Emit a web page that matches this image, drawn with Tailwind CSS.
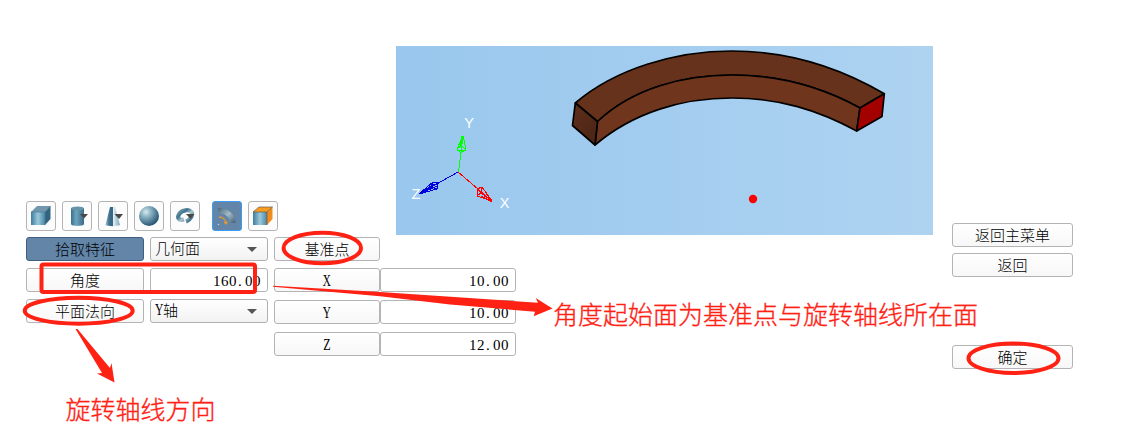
<!DOCTYPE html>
<html lang="zh-CN">
<head>
<meta charset="utf-8">
<title>拾取特征</title>
<script src="https://cdn.jsdelivr.net/npm/@tailwindcss/browser@4"></script>
</head>
<body class="bg-white overflow-hidden">
<div class="relative flex h-[442px] w-[1122px] overflow-hidden bg-white pl-[26px] pt-[46px] font-['Noto_Sans_CJK_SC',sans-serif] text-[15px] font-light leading-none text-black">
  <main class="w-[907px] shrink-0">
    <div class="flex items-end justify-between h-[189px]">
      <div class="flex gap-1.5 mb-1">
        <button class="size-[30px] rounded-[3px] border border-[#b4b4b4] bg-[#fcfcfc]"><svg class="size-7" viewBox="0 0 28 28"><defs><linearGradient id="b" x2="1"><stop stop-color="#3f7c9d"/><stop offset=".5" stop-color="#9bc9dc"/><stop offset="1" stop-color="#4b86a4"/></linearGradient></defs><path d="M4 10L10 4H23.500L18 10Z" fill="#7296ad"/><path d="M4 10H18V23H4Z" fill="url(#b)"/><path d="M18 10L23.500 4V17L18 23Z" fill="#33647f"/><path d="M4 10H18V23M18 10L23.500 4" fill="none" stroke="#477895" stroke-width=".7"/></svg></button>
        <button class="size-[30px] rounded-[3px] border border-[#b4b4b4] bg-[#fcfcfc]"><svg class="size-7" viewBox="0 0 28 28"><defs><linearGradient id="c" x2="1"><stop stop-color="#38718f"/><stop offset=".4" stop-color="#6ea4bd"/><stop offset="1" stop-color="#386a87"/></linearGradient></defs><path d="M8 6V22C8 24.500 21 24.500 21 22V6Z" fill="url(#c)"/><ellipse cx="14.500" cy="6.500" rx="6.500" ry="2" fill="#6894aa"/><path d="M17 12H25L21 16.500Z" fill="#484848"/></svg></button>
        <button class="size-[30px] rounded-[3px] border border-[#b4b4b4] bg-[#fcfcfc]"><svg class="size-7" viewBox="0 0 28 28"><defs><linearGradient id="d" x2="1"><stop stop-color="#9fc2d0"/><stop offset=".25" stop-color="#3e728e"/><stop offset=".48" stop-color="#35617d"/><stop offset=".55" stop-color="#e1edf1"/><stop offset="1" stop-color="#7ba7ba"/></linearGradient></defs><path d="M11 5H16L21 23C18 24.500 9 24.500 6.500 23Z" fill="url(#d)"/><path d="M15.500 12H24L20 17Z" fill="#484848"/></svg></button>
        <button class="size-[30px] rounded-[3px] border border-[#b4b4b4] bg-[#fcfcfc]"><svg class="size-7" viewBox="0 0 28 28"><defs><radialGradient id="e" cx=".35" cy=".3" r=".7"><stop stop-color="#d8e9ee"/><stop offset=".35" stop-color="#8cb4c4"/><stop offset="1" stop-color="#285776"/></radialGradient></defs><circle cx="14" cy="14" r="10" fill="url(#e)"/></svg></button>
        <button class="size-[30px] rounded-[3px] border border-[#b4b4b4] bg-[#fcfcfc]"><svg class="size-7" viewBox="0 0 28 28"><defs><linearGradient id="f" x2="1" y2="1"><stop stop-color="#7ba2b4"/><stop offset=".3" stop-color="#3f728c"/><stop offset=".55" stop-color="#a9c5d0"/><stop offset="1" stop-color="#245978"/></linearGradient></defs><path d="M13 17.500C7 19 6 15 8.500 11.500C11 8 18 7 20.500 10C22 13 20 17.500 15 19.500" fill="none" stroke="url(#f)" stroke-width="4.200"/><path d="M15 12H23.500L19.500 17Z" fill="#484848"/></svg></button>
        <button class="ml-1.5 size-[30px] rounded-[3px] border border-[#3e9cf0] bg-[#6285a8]"><svg class="size-7" viewBox="0 0 28 28"><defs><linearGradient id="g" x2="1" y2="1"><stop stop-color="#45677e"/><stop offset=".5" stop-color="#a5bac4"/><stop offset="1" stop-color="#3e6078"/></linearGradient></defs><path d="M5 6C15 6 22.500 12 22.500 21L17 21C17 16 13 11 5 11Z" fill="url(#g)"/><path d="M6 15C10 15 12.500 18 13 21" fill="none" stroke="#ee982b" stroke-width="1.300"/><path d="M10.500 20L13.200 23L15 19.500Z" fill="#ee982b"/><circle cx="5.500" cy="22.500" r=".8" fill="#a9d8f0"/></svg></button>
        <button class="size-[30px] rounded-[3px] border border-[#b4b4b4] bg-[#fcfcfc]"><svg class="size-7" viewBox="0 0 28 28"><path d="M4 10L10 5H23.500L18 10Z" fill="#f89b20"/><path d="M4 10H18V23H4Z" fill="url(#b)"/><path d="M18 10L23.500 5V17L18 23Z" fill="#f28b1b"/><path d="M4 10H18V23M18 10L23.500 5M4 10L10 5H23.500" fill="none" stroke="#665b4c" stroke-width=".7"/></svg></button>
      </div>
      <svg class="h-[189px] w-[537px]" viewBox="396 46 537 189">
        <defs>
          <linearGradient id="sky" x2="1"><stop stop-color="#99c7ed"/><stop offset=".6" stop-color="#a5cef0"/><stop offset="1" stop-color="#aed3f1"/></linearGradient>
          <linearGradient id="end" x2="1" y2="1"><stop stop-color="#5f2f1b"/><stop offset="1" stop-color="#4a2414"/></linearGradient>
        </defs>
        <rect x="396" y="46" width="537" height="189" fill="url(#sky)"/>
        <g stroke="#000" stroke-width="1.700" stroke-linejoin="round">
          <path d="M575.300 103C615 69 675 51 732 51C785 51 837 66 884.300 93.700L860 108C820 86 779 75 732 75C684 75 633 88 597.500 121.500Z" fill="#66321b"/>
          <path d="M597.500 121.500C633 88 684 75 732 75C779 75 820 86 860 108L856.700 131C818 110 779 98 732 98C683 98 634 112 595 145Z" fill="#70351d"/>
          <path d="M575.300 103L597.500 121.500L595 145L572.500 125.500Z" fill="url(#end)"/>
          <path d="M860 108L884.300 93.700L882 116.500L856.700 131Z" fill="#a30000"/>
        </g>
        <circle cx="753" cy="199" r="4.200" fill="#f00"/>
        <g fill="none" shape-rendering="crispEdges">
          <path stroke="#0f0" d="M458.500 172L463 136L457 149L461 153L466 149L463 136L461 153M457 149L461 146L466 149M461 146L463 136M462 136L460 147M457 150H466"/>
          <path stroke="#00d" d="M458 172L419 194L433 182L438 183L437 189L419 194M433 182L431 187L437 189M431 187L438 183M426 188L432 191M420 193L434 184M422 193L437 186"/>
          <path stroke="#f00" d="M458 172L492 201L482 187L477 189L477 196L492 201L481 193L477 189M482 187L481 193L477 196M487 194L484 198M480 191L492 201M481 196L492 202"/>
        </g>
        <g fill="#fff" font-family="Liberation Sans, sans-serif" font-size="14.500" font-weight="400" text-anchor="middle">
          <text x="469" y="128">Y</text><text x="416" y="199">Z</text><text x="504.500" y="208">X</text>
        </g>
      </svg>
    </div>
    <div class="flex gap-1.5 pt-0.5">
      <div class="grid grid-cols-[118px_118px] gap-x-1.5 gap-y-[7px] content-start">
        <button class="h-6 rounded-[3px] border border-[#3e5f80] bg-[#6285a8] pb-0.5">拾取特征</button>
        <div class="flex h-6 items-center justify-between rounded-[3px] border border-[#b0b0b0] bg-linear-to-b from-white to-[#f2f2f2] pl-1 pr-2.5"><span class="pb-1">几何面</span><svg class="h-[5px] w-2.5" viewBox="0 0 10 5"><path d="M0 0H10L5 5Z" fill="#555"/></svg></div>
        <button class="h-6 rounded-[3px] border border-[#b4b4b4] bg-linear-to-b from-white to-[#f7f7f7] pb-0.5">角度</button>
        <div class="flex h-6 items-center justify-end rounded-[3px] border border-[#b4b4b4] pr-1.5 pt-0.5 font-['Liberation_Serif',serif] text-[15px] tracking-[.5px]">160<span class="w-2 pl-px">.</span>00</div>
        <button class="h-6 rounded-[3px] border border-[#b4b4b4] bg-linear-to-b from-white to-[#f7f7f7] pb-0.5">平面法向</button>
        <div class="flex h-6 items-center justify-between rounded-[3px] border border-[#b0b0b0] bg-linear-to-b from-white to-[#f2f2f2] pl-1 pr-2.5"><span class="flex items-center pb-1"><span class="w-2 origin-left scale-x-[.72] pt-0.5 font-['Liberation_Serif',serif] text-base leading-none">Y</span>轴</span><svg class="h-[5px] w-2.5" viewBox="0 0 10 5"><path d="M0 0H10L5 5Z" fill="#555"/></svg></div>
      </div>
      <div class="grid grid-cols-[106px_136px] gap-y-2 content-start">
        <button class="-mb-px h-6 rounded-[3px] border border-[#b4b4b4] bg-linear-to-b from-white to-[#f7f7f7] pb-0.5">基准点</button><span></span>
        <button class="h-6 rounded-[3px] border border-[#b4b4b4] bg-linear-to-b from-white to-[#f7f7f7] pt-0.5 font-['Liberation_Serif',serif]"><span class="inline-block scale-x-[.7] text-base leading-none">X</span></button>
        <div class="flex h-6 items-center justify-end rounded-[3px] border border-[#b4b4b4] pr-1.5 pt-0.5 font-['Liberation_Serif',serif] tracking-[.5px]">10<span class="w-2 pl-px">.</span>00</div>
        <button class="h-6 rounded-[3px] border border-[#b4b4b4] bg-linear-to-b from-white to-[#f7f7f7] pt-0.5 font-['Liberation_Serif',serif]"><span class="inline-block scale-x-[.7] text-base leading-none">Y</span></button>
        <div class="flex h-6 items-center justify-end rounded-[3px] border border-[#b4b4b4] pr-1.5 pt-0.5 font-['Liberation_Serif',serif] tracking-[.5px]">10<span class="w-2 pl-px">.</span>00</div>
        <button class="h-6 rounded-[3px] border border-[#b4b4b4] bg-linear-to-b from-white to-[#f7f7f7] pt-0.5 font-['Liberation_Serif',serif]"><span class="inline-block scale-x-[.75] text-base leading-none">Z</span></button>
        <div class="flex h-6 items-center justify-end rounded-[3px] border border-[#b4b4b4] pr-1.5 pt-0.5 font-['Liberation_Serif',serif] tracking-[.5px]">12<span class="w-2 pl-px">.</span>00</div>
      </div>
    </div>
  </main>
  <aside class="ml-[19px] flex w-[121px] flex-col gap-1.5 pt-[177px]">
    <button class="h-6 rounded-[3px] border border-[#b4b4b4] bg-linear-to-b from-white to-[#f7f7f7] pb-0.5">返回主菜单</button>
    <button class="h-6 rounded-[3px] border border-[#b4b4b4] bg-linear-to-b from-white to-[#f7f7f7] pb-0.5">返回</button>
    <button class="mt-[62px] h-6 rounded-[3px] border border-[#b4b4b4] bg-linear-to-b from-white to-[#f7f7f7] pb-0.5">确定</button>
  </aside>
  <svg class="pointer-events-none absolute inset-0 h-[442px] w-[1122px]" viewBox="0 0 1122 442">
    <g fill="none" stroke="#ff2114" stroke-width="4">
      <rect x="41.500" y="264.500" width="213.500" height="27.500" rx="2"/>
      <ellipse cx="78.700" cy="310.700" rx="54" ry="13"/>
      <ellipse cx="322.300" cy="248" rx="38.700" ry="15.300"/>
      <ellipse cx="1013.500" cy="358.300" rx="45" ry="14.700"/>
    </g>
    <g fill="#ff2114">
      <path d="M273 285.800L380 292L538 302.700L535.700 298L552.500 308.500L533.700 316.300L535 311.700L450 304.500L380 296.300L273 286.800Z"/>
      <path d="M75.500 329L77.500 329L110 368L111.500 363L114.500 382.500L97 373.500L102 373Z"/>
    </g>
    <g fill="#ff2114" stroke="#ff2114" stroke-width=".35" font-family="Noto Sans CJK SC, sans-serif" font-size="25" font-weight="300">
      <text x="553" y="324">角度起始面为基准点与旋转轴线所在面</text>
      <text x="65.500" y="419">旋转轴线方向</text>
    </g>
  </svg>
</div>
</body>
</html>
